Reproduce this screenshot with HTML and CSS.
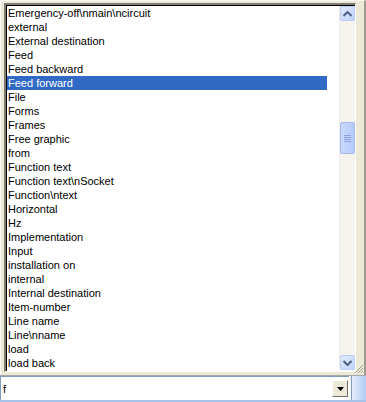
FILE: index.html
```html
<!DOCTYPE html>
<html>
<head>
<meta charset="utf-8">
<link rel="stylesheet" href="styles.css">
</head>
<body>
<div class="window">
  <div class="listframe">
    <div class="listbox">
      <div class="items">
        <div class="item">Emergency-off\nmain\ncircuit</div>
        <div class="item">external</div>
        <div class="item">External destination</div>
        <div class="item">Feed</div>
        <div class="item">Feed backward</div>
        <div class="item selected">Feed forward</div>
        <div class="item">File</div>
        <div class="item">Forms</div>
        <div class="item">Frames</div>
        <div class="item">Free graphic</div>
        <div class="item">from</div>
        <div class="item">Function text</div>
        <div class="item">Function text\nSocket</div>
        <div class="item">Function\ntext</div>
        <div class="item">Horizontal</div>
        <div class="item">Hz</div>
        <div class="item">Implementation</div>
        <div class="item">Input</div>
        <div class="item">installation on</div>
        <div class="item">internal</div>
        <div class="item">Internal destination</div>
        <div class="item">Item-number</div>
        <div class="item">Line name</div>
        <div class="item">Line\nname</div>
        <div class="item">load</div>
        <div class="item">load back</div>
      </div>
      <div class="vscroll">
        <div class="sbtn">
          <svg width="9" height="6" viewBox="0 0 9 6"><path d="M0.5 5 L4.5 1 L8.5 5" fill="none" stroke="#4d6185" stroke-width="2"/></svg>
        </div>
        <div class="track">
          <div class="thumb">
            <svg width="7" height="8" viewBox="0 0 7 8"><path d="M0 1.5H7M0 3.5H7M0 5.5H7M0 7.5H7" stroke="#8ca3e0" stroke-width="1"/></svg>
          </div>
        </div>
        <div class="sbtn">
          <svg width="9" height="6" viewBox="0 0 9 6"><path d="M0.5 1 L4.5 5 L8.5 1" fill="none" stroke="#4d6185" stroke-width="2"/></svg>
        </div>
      </div>
    </div>
    <div class="grip">
      <svg width="10" height="10" viewBox="0 0 10 10"><path d="M9 1L1 9M9 4L4 9M9 7L7 9" stroke="#a09e91" stroke-width="1"/></svg>
    </div>
  </div>
  <div class="comborow">
    <div class="combo">
      <span class="combotext">f</span>
      <div class="dropbtn">
        <svg width="7" height="4" viewBox="0 0 7 4"><path d="M0 0H7L3.5 4Z" fill="#000"/></svg>
      </div>
    </div>
    <div class="side"></div>
  </div>
</div>
</body>
</html>
```
FILE: styles.css
```css
html, body {
  margin: 0;
  padding: 0;
  background: #ffffff;
}
.window {
  width: 366px;
  height: 402px;
  display: flex;
  flex-direction: column;
  font-family: "Liberation Sans", Arial, sans-serif;
  font-size: 11px;
  color: #000;
  background: #ece9d8;
}
.listframe {
  position: relative;
  height: 375px;
  box-sizing: border-box;
  padding: 2px 3px 3px 3px;
  border-top: 1px solid #f8f7f2;
  border-left: 1px solid #f8f7f2;
  border-right: 2px solid #9d9b8f;
  background: #ece9d8;
  display: flex;
}
.listbox {
  flex: 1;
  display: flex;
  background: #fff;
  border-top: 2px solid #7f7d73;
  border-left: 2px solid #7f7d73;
  border-right: 1px solid #fff;
  border-bottom: 1px solid #fff;
  box-shadow: inset 1px 1px 0 #000;
  padding: 1px 0 0 1px;
  margin-right: 6px;
}
.items {
  width: 332px;
  display: flex;
  flex-direction: column;
}
.item {
  width: 320px;
  height: 14px;
  line-height: 14px;
  padding-left: 1px;
  box-sizing: border-box;
  white-space: nowrap;
}
.item.selected {
  background: #316ac5;
  color: #fff;
}
.vscroll {
  width: 15px;
  height: 364px;
  display: flex;
  flex-direction: column;
  background: #f4f3ee;
  border-left: 1px solid #eeede5;
}
.sbtn {
  width: 15px;
  height: 15px;
  box-sizing: border-box;
  border: 1px solid #b9cdf6;
  border-radius: 2px;
  background: linear-gradient(135deg, #e1eafe, #c1d3fb);
  display: flex;
  align-items: center;
  justify-content: center;
}
.track {
  flex: 1;
  padding-top: 101px;
}
.thumb {
  width: 15px;
  height: 32px;
  box-sizing: border-box;
  border: 1px solid #a4b9ee;
  border-radius: 2px;
  background: linear-gradient(90deg, #c9d8fc, #b6cafa);
  display: flex;
  align-items: center;
  justify-content: center;
}
.grip {
  position: absolute;
  right: 0;
  bottom: 1px;
  width: 10px;
  height: 10px;
}
.comborow {
  flex: 1;
  display: flex;
  border-top: 1px solid #a7a6aa;
  border-bottom: 2px solid #a9c2ec;
}
.combo {
  width: 349px;
  display: flex;
  align-items: center;
  background: #fff;
  border-left: 1px solid #7f9db9;
  border-top: 1px solid #7f9db9;
  padding-left: 1px;
  box-sizing: border-box;
}
.combotext {
  flex: 1;
  padding-left: 1px;
}
.dropbtn {
  width: 16px;
  height: 17px;
  margin-right: 1px;
  background: #ece9d8;
  border-top: 1px solid #fff;
  border-left: 1px solid #fff;
  border-right: 1px solid #716f64;
  border-bottom: 1px solid #716f64;
  box-sizing: border-box;
  display: flex;
  align-items: center;
  justify-content: center;
}
.side {
  flex: 1;
  background: linear-gradient(90deg, #f8f7f2 0, #f8f7f2 2px, #7f9db9 2px, #7f9db9 3px, #e6eefc 3px, #b1cbf3 100%);
}
```
